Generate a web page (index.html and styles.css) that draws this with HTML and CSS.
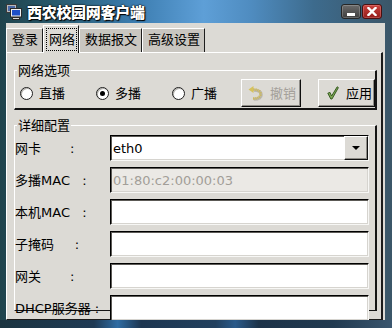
FILE: index.html
```html
<!DOCTYPE html>
<html>
<head>
<meta charset="utf-8">
<link rel="stylesheet" href="styles.css">
</head>
<body>
<div class="window">
  <div class="titlebar">
    <svg class="appicon" width="16" height="16" viewBox="0 0 16 16">
      <rect x="0.5" y="0.5" width="10" height="8" fill="#b8b8b8" stroke="#3a3a3a"/>
      <rect x="2" y="2" width="7" height="5" fill="#4a6aa8"/>
      <rect x="4.5" y="4.5" width="11" height="8.5" fill="#f0f0f0" stroke="#2a2a2a"/>
      <rect x="6" y="6" width="8" height="5.5" fill="#1e4fc8"/>
      <rect x="6.5" y="13.5" width="7" height="2" fill="#d8d8d8" stroke="#2a2a2a"/>
    </svg>
    <span class="title">西农校园网客户端</span>
    <div class="wbtns">
      <span class="wbtn min"><i></i></span>
      <span class="wbtn close">
        <svg width="10" height="9" viewBox="0 0 10 9"><path d="M1.5 1 L8.5 8 M8.5 1 L1.5 8" stroke="#fff" stroke-width="2.4" stroke-linecap="square"/></svg>
      </span>
    </div>
  </div>
  <div class="frame">
    <div class="tabs">
      <div class="tab">登录</div>
      <div class="tab active"><span class="focus">网络</span></div>
      <div class="tab">数据报文</div>
      <div class="tab">高级设置</div>
    </div>
    <div class="pane">
      <fieldset class="group g1">
        <legend>网络选项</legend>
        <div class="opts">
          <label class="radio"><span class="dot"></span>直播</label>
          <label class="radio on"><span class="dot"></span>多播</label>
          <label class="radio"><span class="dot"></span>广播</label>
          <div class="btns">
            <button class="btn undo">
              <svg width="15" height="15" viewBox="0 0 15 15">
                <path d="M5 3.5 Q12.5 3.5 12.5 8 Q12.5 12.5 5 12.5" fill="none" stroke="#8f8b84" stroke-width="3" opacity="0.45" transform="translate(0.8 0.8)"/>
                <path d="M5 3.5 Q12.5 3.5 12.5 8 Q12.5 12.5 5 12.5" fill="none" stroke="#cdb95a" stroke-width="2.6" stroke-dasharray="1.2 0.8"/>
                <path d="M0.5 3.5 L5.5 0 L5.5 7 Z" fill="#d6c25e"/>
              </svg>
              撤销
            </button>
            <button class="btn apply">
              <svg width="12" height="14" viewBox="0 0 12 14">
                <path d="M0.8 7.2 L3 6.4 L4.6 10 L10.2 0.8 L11.4 1.6 L5 13 L3.8 13 Z" fill="#7ea655" stroke="#2d5419" stroke-width="0.9" stroke-linejoin="round"/>
              </svg>
              应用
            </button>
          </div>
        </div>
      </fieldset>
      <fieldset class="group g2">
        <legend>详细配置</legend>
        <div class="form">
          <div class="lbl">网卡       :</div>
          <div class="field combo"><span class="val">eth0</span><span class="drop"><i></i></span></div>
          <div class="lbl">多播MAC   :</div>
          <div class="field disabled"><span class="val">01:80:c2:00:00:03</span></div>
          <div class="lbl">本机MAC   :</div>
          <div class="field"></div>
          <div class="lbl">子掩码     :</div>
          <div class="field"></div>
          <div class="lbl">网关       :</div>
          <div class="field"></div>
          <div class="lbl">DHCP服务器 :</div>
          <div class="field"></div>
        </div>
      </fieldset>
    </div>
  </div>
</div>
</body>
</html>
```
FILE: styles.css
```css
* { box-sizing: border-box; }
html, body { margin: 0; padding: 0; }
body {
  width: 392px;
  height: 328px;
  overflow: hidden;
  font-family: "DejaVu Sans", "Noto Sans CJK SC", sans-serif;
  font-size: 13px;
  color: #000;
  background:
    linear-gradient(90deg, #1b3440 0%, #1f3a54 24%, #2f6ca3 30%, #1d3650 36%, #22405e 55%, #2a5a8a 60%, #1c3248 66%, #213a50 85%, #3a566e 100%) left bottom / 100% 8px no-repeat,
    linear-gradient(90deg, #1f434c 0%, #28596c 14%, #3b7caf 34%, #5e9fd7 52%, #4f8cc0 64%, #3d6b8d 80%, #3b5668 100%);
}
.window {
  width: 379px;
  height: 320px;
  margin-left: 6px;
  display: flex;
  flex-direction: column;
}
.titlebar {
  height: 23px;
  flex: none;
  display: flex;
  align-items: flex-start;
}
.appicon { margin-top: 4px; flex: none; }
.title {
  margin-left: 5px;
  margin-top: 3px;
  line-height: 17px;
  font-family: "Noto Sans CJK SC", sans-serif;
  font-size: 15px;
  font-weight: 900;
  color: #fff;
  letter-spacing: -0.3px;
  text-shadow: 1px 1px 1px #000, 0 0 2px #000, 0 0 1px #000;
}
.wbtns {
  margin-left: auto;
  margin-top: 4px;
  margin-right: 3px;
  display: flex;
  gap: 1px;
  position: relative;
  z-index: 2;
}
.wbtn {
  width: 20px;
  height: 15px;
  border-radius: 3px;
  border: 1px solid #262626;
  display: flex;
  align-items: center;
  justify-content: center;
}
.wbtn.min {
  background: linear-gradient(#6c6c6c, #3e3e3e);
  box-shadow: inset 0 0 0 1px rgba(255,255,255,0.2);
  align-items: flex-end;
}
.wbtn.min i {
  display: block;
  width: 8px;
  height: 3px;
  background: #fff;
  margin-bottom: 2px;
}
.wbtn.close {
  background: linear-gradient(#c9423d, #951c1a);
  border-color: #4a1010;
  box-shadow: inset 0 0 0 1px rgba(255,200,200,0.25);
}
.frame {
  flex: 1;
  min-height: 0;
  background: #dcdad5;
  overflow: hidden;
  padding-right: 2px;
  display: flex;
  flex-direction: column;
}
.tabs {
  height: 29px;
  flex: none;
  display: flex;
  align-items: flex-end;
}
.tab {
  height: 24px;
  padding: 0 4px 0 5px;
  border-top: 1px solid #fff;
  border-left: 1px solid #fff;
  border-right: 1px solid #1e1e1e;
  background: #c9c6c0;
  line-height: 22px;
  white-space: nowrap;
}
.tab.active {
  height: 28px;
  margin-bottom: -1px;
  padding: 2px 1px 2px 2px;
  background: #dcdad5;
  position: relative;
  z-index: 1;
}
.focus {
  display: block;
  border: 1px dotted #000;
  padding: 0 1px 0 2px;
  line-height: 21px;
}
.pane {
  flex: 1;
  min-height: 0;
  border-top: 1px solid #fff;
  border-left: 1px solid #fff;
  border-right: 2px solid #1a1a1a;
  border-bottom: 1px solid #1a1a1a;
  padding: 0 4px 0 7px;
}
.group {
  margin: 0;
  min-width: 0;
  border-style: solid;
  border-color: #fff #141414 #141414 #fff;
}
.group legend {
  padding: 0 1px;
  margin-left: 2px;
  line-height: 15px;
}
.g1 {
  margin-top: 10px;
  border-width: 1px 2px 2px 1px;
  padding: 1px 0;
}
.opts {
  display: flex;
  align-items: center;
  height: 28px;
  padding-left: 5px;
}
.radio {
  flex: none;
  display: flex;
  align-items: center;
  gap: 6px;
  white-space: nowrap;
  line-height: 15px;
}
.radio + .radio { margin-left: 31px; }
.radio .dot {
  flex: none;
  width: 13px;
  height: 13px;
  border-radius: 50%;
  border: 1px solid #1e1e1e;
  background: #fff;
  box-shadow: inset 1px 1px 0 #b5b3ae;
  display: flex;
  align-items: center;
  justify-content: center;
}
.radio.on .dot::after {
  content: "";
  width: 5px;
  height: 5px;
  border-radius: 50%;
  background: #000;
}
.btns {
  flex: none;
  margin-left: auto;
  display: flex;
  gap: 17px;
}
.btn {
  flex: none;
  height: 28px;
  margin: 0;
  padding: 0;
  display: flex;
  align-items: center;
  gap: 7px;
  white-space: nowrap;
  font: inherit;
  line-height: 15px;
  color: #000;
  background: #dcdad5;
  border: 1px solid;
  border-color: #fff #0e0e0e #0e0e0e #fff;
  box-shadow: inset -1px -1px 0 #8e8c87;
}
.btn.undo {
  width: 60px;
  padding-left: 6px;
  color: #a4a09a;
}
.btn.apply {
  width: 57px;
  padding-left: 8px;
}
.g2 {
  margin-top: 8px;
  border-width: 1px 2px 1px 1px;
  padding: 2px 6px 0 0;
  height: 193px;
}
.form {
  display: grid;
  grid-template-columns: 95px 259px;
  grid-auto-rows: 26px;
  row-gap: 6px;
}
.lbl {
  display: flex;
  align-items: center;
  white-space: pre;
  line-height: 15px;
}
.field {
  display: flex;
  align-items: center;
  background: #fff;
  border: 1px solid;
  border-color: #000 #f7f7f5 #f7f7f5 #000;
  box-shadow: inset 1px 1px 0 #5c5a56, inset -1px -1px 0 #d6d4cf;
  padding-left: 2px;
  line-height: 15px;
}
.field.disabled {
  background: #ebe9e5;
  color: #a29e98;
}
.combo .drop {
  margin-left: auto;
  align-self: stretch;
  width: 24px;
  background: #dcdad5;
  border: 1px solid;
  border-color: #fff #111 #111 #fff;
  box-shadow: inset -1px -1px 0 #8e8c87;
  display: flex;
  align-items: center;
  justify-content: center;
}
.combo .drop i {
  display: block;
  width: 0;
  height: 0;
  border-left: 4px solid transparent;
  border-right: 4px solid transparent;
  border-top: 4px solid #000;
}
```
